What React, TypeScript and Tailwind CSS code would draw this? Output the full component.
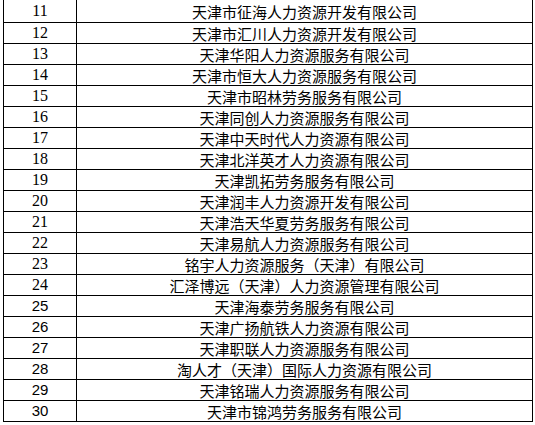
const rows = [
  [11, '天津市征海人力资源开发有限公司'],
  [12, '天津市汇川人力资源开发有限公司'],
  [13, '天津华阳人力资源服务有限公司'],
  [14, '天津市恒大人力资源服务有限公司'],
  [15, '天津市昭林劳务服务有限公司'],
  [16, '天津同创人力资源服务有限公司'],
  [17, '天津中天时代人力资源有限公司'],
  [18, '天津北洋英才人力资源有限公司'],
  [19, '天津凯拓劳务服务有限公司'],
  [20, '天津润丰人力资源开发有限公司'],
  [21, '天津浩天华夏劳务服务有限公司'],
  [22, '天津易航人力资源服务有限公司'],
  [23, '铭宇人力资源服务（天津）有限公司'],
  [24, '汇泽博远（天津）人力资源管理有限公司'],
  [25, '天津海泰劳务服务有限公司'],
  [26, '天津广扬航铁人力资源有限公司'],
  [27, '天津职联人力资源服务有限公司'],
  [28, '淘人才（天津）国际人力资源有限公司'],
  [29, '天津铭瑞人力资源服务有限公司'],
  [30, '天津市锦鸿劳务服务有限公司'],
] as const;

export default function App() {
  return (
    <div className="w-[535px] h-[425px] bg-white pl-[3px]">
      <div className="w-[530px] border-l border-r border-black">
        {rows.map(([num, name], i) => (
          <div
            key={num}
            className={`flex border-b border-black ${i === 0 ? 'h-[23px]' : 'h-[21px]'}`}
          >
            <div
              className={`w-[73px] border-r border-black flex items-center justify-center text-black ${
                num <= 24
                  ? "font-['Liberation_Serif',serif] text-[16px]"
                  : "font-['Liberation_Sans',sans-serif] text-[15px]"
              }`}
            >
              {num}
            </div>
            <div className="flex-1 flex items-center justify-center text-[15px] text-black font-['Noto_Sans_CJK_SC',sans-serif] leading-none">
              {name}
            </div>
          </div>
        ))}
      </div>
    </div>
  );
}
